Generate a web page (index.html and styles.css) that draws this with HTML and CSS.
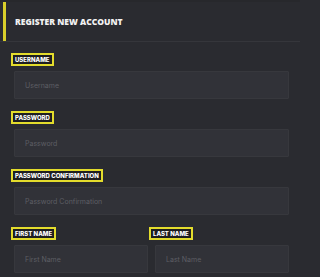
FILE: index.html
```html
<!DOCTYPE html>
<html>
<head>
<meta charset="utf-8">
<link rel="stylesheet" href="styles.css">
</head>
<body>
<div class="panel">
  <div class="header">
    <div class="accent"></div>
    <h1 class="title">REGISTER NEW ACCOUNT</h1>
  </div>
  <form class="form">
    <div class="field">
      <span class="label">USERNAME</span>
      <input class="input" placeholder="Username">
    </div>
    <div class="field">
      <span class="label">PASSWORD</span>
      <input class="input" placeholder="Password">
    </div>
    <div class="field">
      <span class="label">PASSWORD CONFIRMATION</span>
      <input class="input" placeholder="Password Confirmation">
    </div>
    <div class="row">
      <div class="field field-left">
        <span class="label">FIRST NAME</span>
        <input class="input" placeholder="First Name">
      </div>
      <div class="field field-right">
        <span class="label">LAST NAME</span>
        <input class="input" placeholder="Last Name">
      </div>
    </div>
  </form>
</div>
</body>
</html>
```
FILE: styles.css
```css
html, body {
  margin: 0;
  padding: 0;
  background: #2a2b30;
  height: 100%;
  overflow: hidden;
}
.panel {
  width: 300px;
  font-family: "Inter", "Open Sans", sans-serif;
  color: #fff;
  border-top: 2px solid #27282c;
}
.header {
  display: flex;
  align-items: center;
  height: 39px;
  border-bottom: 1px solid #35363b;
}
.accent {
  width: 3px;
  height: 39px;
  margin-left: 3px;
  background: #d9cf2b;
}
.title {
  margin: 0 0 0 9px;
  font-family: "Open Sans", sans-serif;
  font-size: 8.5px;
  font-weight: 800;
  color: #f2f2f2;
  padding-bottom: 1px;
}
.form {
  padding: 11px 11px 0 11px;
  display: flex;
  flex-direction: column;
  gap: 12px;
}
.field {
  display: flex;
  flex-direction: column;
  align-items: flex-start;
  gap: 5px;
}
.label {
  display: inline-block;
  box-sizing: border-box;
  height: 13px;
  line-height: 9px;
  padding: 0 2px;
  border: 2px solid #e3dc2c;
  background: #1e1e21;
  color: #fff;
  font-size: 6px;
  font-weight: 800;
}
.input {
  box-sizing: border-box;
  align-self: stretch;
  margin-left: 3px;
  height: 28px;
  border: 1px solid #37383d;
  background: #313238;
  border-radius: 1px;
  padding: 0 10px;
  font-family: "Inter", "Open Sans", sans-serif;
  font-size: 7px;
  color: #ddd;
  outline: none;
}
.input::placeholder {
  color: #5d5e64;
}
.row {
  display: grid;
  grid-template-columns: 138px 1fr;
}
.field-left {
  padding-right: 1px;
}
.field-right .input {
  margin-left: 6px;
}
```
